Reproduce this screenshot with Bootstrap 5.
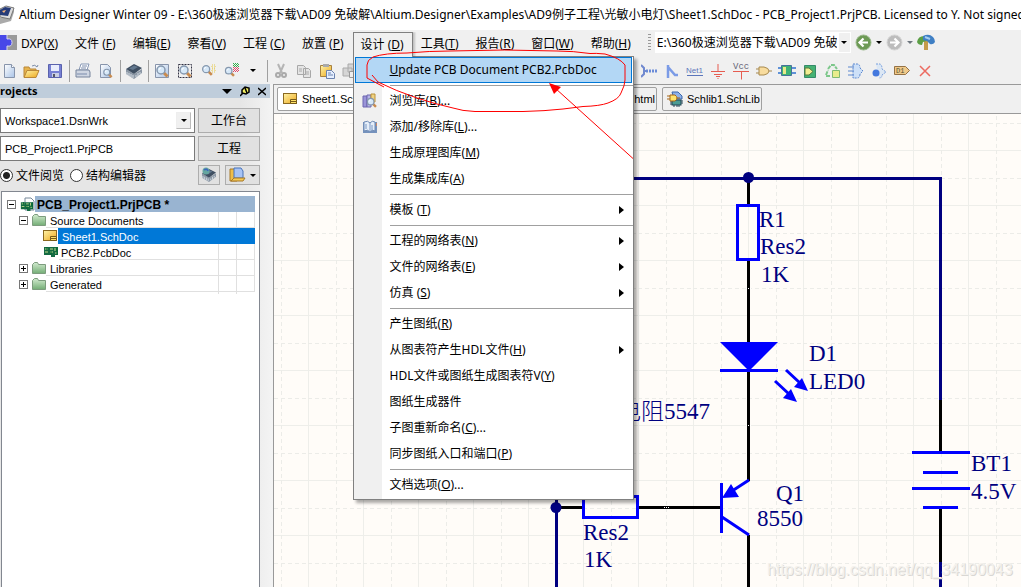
<!DOCTYPE html>
<html lang="zh-CN">
<head>
<meta charset="utf-8">
<meta name="viewport" content="width=device-width, initial-scale=1">
<title>Altium Designer Winter 09</title>
<link href="https://cdn.jsdelivr.net/npm/bootstrap@5.3.0/dist/css/bootstrap.min.css" rel="stylesheet">
<style>
  :root { --face: #f0f0f0; --line: #a0a0a0; --ui: "Noto Sans", "Noto Sans CJK SC", sans-serif; --small: "Liberation Sans", "Noto Sans CJK SC", sans-serif; }
  body { font: 12px/16px var(--ui); color: #000; background: var(--face); overflow: hidden; }
  svg { display: block; flex: none; }
  button { font: inherit; color: inherit; background: none; border: 0; padding: 0; }
  .titlebar { height: 30px; background: #fff; }
  .titlebar h1 { font-size: 12px; line-height: 16px; }
  .menubar { height: 27px; padding-top: 2px; }
  .menubar .top-item { height: 25px; padding: 0 9px 1px 8px; white-space: nowrap; }
  .menu-open { z-index: 20; }
  .menu-open > .top-item { position: relative; z-index: 2; padding: 0 8px 0 7px; background: var(--face); border: 1px solid #808080; border-bottom: 0; box-shadow: 2px 0 2px #0003; clip-path: inset(0 -4px 0 0); }
  .menu-pop { top: 24px; left: 0; width: 281px; z-index: 1; border: 1px solid #808080; padding-bottom: 1px; box-shadow: 3px 3px 3px #0005; background: linear-gradient(90deg, var(--face) 28px, #fff 28px); }
  .menu-pop button { height: 26px; padding: 0 9px 0 8px; }
  .menu-pop button.active { background: #b3d7f5; border: 1px solid #0078d7; margin: 0 1px; padding: 0 6px; width: calc(100% - 2px); }
  .menu-pop hr { margin: 2px 0 2px 36px; border: 0; height: 1px; background: var(--line); opacity: 1; }
  .slot { width: 28px; flex: none; }
  .grip { width: 3px; height: 18px; background: repeating-linear-gradient(#999 0 1px, transparent 1px 3px); }
  .address { width: 196px; height: 21px; border: 0; border-radius: 0; padding: 0 14px 0 2px; font: inherit; appearance: none; background: linear-gradient(var(--face), var(--face)) right 1px center / 11px 19px no-repeat #fff; color: #000; }
  .caret { width: 0; height: 0; border: 3px solid transparent; border-top-color: currentColor; border-bottom: 0; }
  .toolbar { height: 27px; }
  .tool { width: 23px; height: 24px; display: grid; place-items: center; flex: none; }
  .bar { width: 1px; height: 22px; background: var(--line); margin: 0 1px 0 3px; flex: none; }
  .first-group { margin-left: -3px; }
  .wiring { margin-left: 276px; }
  .side { width: 274px; flex: none; background: linear-gradient(90deg, #e6e6e6 240px, #f4f4f4); border-right: 1px solid #999; font-family: var(--small); font-size: 11px; }
  .side-head { height: 14px; width: 270px; background: #bfcddb; font: bold 11px/14px "Open Sans", sans-serif; }
  .side-body { padding: 10px 13px 0 0; }
  .side-grid { display: grid; grid-template-columns: 195px 62px; gap: 3px; }
  .side .field { height: 25px; border: 1px solid #7a7a7a; border-radius: 0; background: #fff; font: inherit; color: #000; padding: 0 4px 0; width: 100%; min-width: 0; appearance: none; }
  .drop-box { right: 4px; top: 4px; width: 15px; height: 17px; background: var(--face); border: 1px solid #bbb; border-left-color: #eee; border-top-color: #eee; pointer-events: none; }
  .push { background: #e1e1e1; border: 1px solid #adadad; font-size: 12px; }
  .views { height: 20px; margin-top: 4px; font-size: 12px; }
  .views label { margin: 2px 6px 0 3px; }
  .views input { width: 13px; height: 13px; margin: 0; appearance: none; border: 1px solid #333; border-radius: 50%; background: #fff; }
  .views input:checked { background: radial-gradient(#222 0 3px, #fff 4px); }
  .tool-square { width: 22px; margin-right: 5px; }
  .tool-split { width: 35px; }
  .tree { margin: 6px 0 0 1px; border: 1px solid #828790; border-bottom: 0; background: #fff; padding: 4px 4px 0 5px; }
  .tree-row { height: 16px; line-height: 18px; }
  .tree-row .name { height: 16px; flex: 1; white-space: nowrap; padding-left: 2px; display: grid; grid-template-columns: 1fr 18px 18px; border-bottom: 1px solid #e0e0e0; border-right: 1px solid #e0e0e0; }
  .tree-row .name i { border-left: 1px solid #e0e0e0; }
  .tree-row .root { background: #99b4d1; font: bold 12px/18px var(--small); border: 0; }
  .tree-row .sel { background: #0078d7; color: #fff; border: 0; }
  .knob { width: 9px; height: 9px; border: 1px solid #777; background: linear-gradient(#000, #000) center / 5px 1px no-repeat #fff; flex: none; }
  .knob.plus { background: linear-gradient(#000, #000) center / 5px 1px no-repeat, linear-gradient(#000, #000) center / 1px 5px no-repeat #fff; }
  .l1 { padding-left: 12px; }
  .l2 { padding-left: 36px; }
  .tabs { height: 30px; border-top: 1px solid #999; border-bottom: 1px solid #999; padding: 0 3px; gap: 5px; font: 11px/16px var(--small); }
  .doc-tab { height: 24px; border: 1px solid var(--line); border-radius: 2px; padding: 0 1px 0 4px; white-space: nowrap; background: var(--face); }
  .tab-sheet { width: 101px; background: #fff; padding-left: 5px; }
  .tab-html { width: 274px; }
  .sheet { background: #fffcf8; min-height: 0; }
  .sheet text { font: 23px "Liberation Serif", "Noto Sans CJK SC", serif; fill: #000080; }
  .sheet text.thin { font-weight: 300; }
  .sheet .watermark { font: 16px "Liberation Sans", sans-serif; fill: #f3f1ed; }
  .sheet .watermark.shade { fill: #d9d7d3; }
  .notes { inset: 0; pointer-events: none; z-index: 40; }
</style>
</head>
<body class="vh-100 d-flex flex-column position-relative">

<svg width="0" height="0" class="position-absolute" aria-hidden="true">
  <defs>
    <linearGradient id="gold" x1="0" y1="0" x2="1" y2="1"><stop offset="0" stop-color="#fff3a8"/><stop offset="1" stop-color="#eda81c"/></linearGradient>
    <linearGradient id="blue" x1="0" y1="0" x2="1" y2="1"><stop offset="0" stop-color="#fff"/><stop offset="1" stop-color="#a9c3e6"/></linearGradient>
    <linearGradient id="green" x1="0" y1="0" x2="0" y2="1"><stop offset="0" stop-color="#d2ebcf"/><stop offset="1" stop-color="#73ad75"/></linearGradient>
    <symbol id="lens" viewBox="0 0 16 16"><path d="M9.500 9.500l4 4" stroke="#c98b4e" stroke-width="3"/><circle cx="7" cy="7" r="4" fill="#d6e8f8" stroke="#8698ae" stroke-width="1.500"/><path d="M5 7q0-2 2-2" fill="none" stroke="#fff"/></symbol>
    <symbol id="chip" viewBox="0 0 16 16"><path d="M0 6l8 5 8-5v4l-8 6-8-5z" fill="#8b97a5"/><path d="M0 6l8-5 8 4-8 6z" fill="#3f4f62"/><path d="M3 5.500l5-3 4 1.500-5 3z" fill="#62788f"/><path d="M1 9v3M3 10v3M5 11v3M7 12v3M10 12v2M12 10v3M14 9v2" stroke="#d4dbe2"/></symbol>
    <symbol id="folder" viewBox="0 0 14 12"><path d="M.5 11.500v-9l2-2h3l1 2h7v9z" fill="url(#green)" stroke="#7d9c7e"/></symbol>
    <symbol id="schdoc" viewBox="0 0 15 12"><rect x=".5" y=".5" width="13" height="10" fill="url(#gold)" stroke="#8b6920"/><path d="M7.500 6.500h6v4h-6zM7.500 8.500h6" fill="#ffe166" stroke="#765a19"/></symbol>
    <symbol id="pcbdoc" viewBox="0 0 16 12"><path d="M1 1h14v8h-3v2h-4V9H1z" fill="#146b43"/><path d="M2 3h3M7 3h3M2 6h3M7 6h3M12 2v3M12 7h2" stroke="#c7df8e"/><path d="M4 1v3M8 5v4M14 1v8" stroke="#063"/></symbol>
    <symbol id="schlib" viewBox="0 0 16 16"><path d="M5 1h6l4 4v3H7z" fill="#8fb1e8" stroke="#3b67aa"/><rect x="5" y="9" width="9" height="5" fill="#4b9b93" stroke="#245"/><path d="M7 14v2M10 14v2M12 14v2M14 10h2M14 12h2M3 11h2M3 13h2" stroke="#245"/><path d="M3 4h5q4 3 0 6H3z" fill="#ffe36a" stroke="#a66718"/><path d="M0 5h3M0 8h3M10 7h3" stroke="#a66718"/></symbol>
  </defs>
</svg>

<header class="titlebar d-flex align-items-center overflow-hidden">
  <svg width="15" height="20" viewBox="0 0 15 20"><path d="M0 13l10-3 4-8v5l-3 9-11 3z" fill="#aaa"/><path d="M0 4l6-3 8 2-4 11-10-2z" fill="#ddd" stroke="#777"/><path d="M0 5l5-3 6 1-3 8-8-1z" fill="#263b78"/><path d="M2 6l4-1-2 3z" fill="#f4b57c"/></svg>
  <h1 class="m-0 ms-1 fw-normal text-nowrap">Altium Designer Winter 09 - E:\360极速浏览器下载\AD09 免破解\Altium.Designer\Examples\AD9例子工程\光敏小电灯\Sheet1.SchDoc - PCB_Project1.PrjPCB. Licensed to Y. Not signed in.</h1>
</header>

<nav class="menubar d-flex">
  <svg width="17" height="21" viewBox="0 0 17 21"><path d="M0 3h17v15H0z" fill="#999"/><path d="M0 3h7v4q5-1 5 3.500T7 14v4H0z" fill="#4848e8"/><path d="M7 3v4q5-1 5 3.500T7 14v4" fill="none" stroke="#d8d8f0"/></svg>
  <button class="top-item ps-1">DXP(<u>X</u>)</button>
  <button class="top-item">文件 (<u>F</u>)</button>
  <button class="top-item">编辑(<u>E</u>)</button>
  <button class="top-item">察看(<u>V</u>)</button>
  <button class="top-item">工程 (<u>C</u>)</button>
  <button class="top-item">放置 (<u>P</u>)</button>
  <div class="menu-open position-relative">
    <button class="top-item" aria-expanded="true">设计 (<u>D</u>)</button>
    <div class="menu-pop position-absolute" role="menu">
      <button class="active d-flex align-items-center" role="menuitem"><span class="slot"></span><span class="text-nowrap"><u>U</u>pdate PCB Document PCB2.PcbDoc</span></button>
      <hr>
      <button class="d-flex align-items-center w-100" role="menuitem"><span class="slot"><svg width="16" height="16"><path d="M1 3h4v11H1z" fill="#9a94d8" stroke="#6c66b0"/><path d="M5 2h4v12H5z" fill="#b8b5e8" stroke="#6c66b0"/><path d="M9 1h4v8H9z" fill="#efd283" stroke="#bb9239"/><use href="#lens" x="3" y="3" width="13" height="13"/></svg></span><span>浏览库(<u>B</u>)...</span></button>
      <button class="d-flex align-items-center w-100" role="menuitem"><span class="slot"><svg width="16" height="16"><path d="M1 3h14v11H1z" fill="#7592bd"/><path d="M2 3q4-2 6 1 2-3 5-1v9q-3-2-5 1-2-3-6-1z" fill="#e5eef9" stroke="#6f8bb5"/><path d="M8 4v9M4 5v5M10 6v5" stroke="#7b98c4"/><path d="M14.500 4v3" stroke="#c86"/></svg></span><span>添加/移除库(<u>L</u>)...</span></button>
      <button class="d-flex align-items-center w-100" role="menuitem"><span class="slot"></span><span>生成原理图库(<u>M</u>)</span></button>
      <button class="d-flex align-items-center w-100" role="menuitem"><span class="slot"></span><span>生成集成库(<u>A</u>)</span></button>
      <hr>
      <button class="d-flex align-items-center w-100" role="menuitem"><span class="slot"></span><span>模板 (<u>T</u>)</span><svg class="ms-auto" width="5" height="8"><path d="M0 0v8l5-4z"/></svg></button>
      <hr>
      <button class="d-flex align-items-center w-100" role="menuitem"><span class="slot"></span><span>工程的网络表(<u>N</u>)</span><svg class="ms-auto" width="5" height="8"><path d="M0 0v8l5-4z"/></svg></button>
      <button class="d-flex align-items-center w-100" role="menuitem"><span class="slot"></span><span>文件的网络表(<u>E</u>)</span><svg class="ms-auto" width="5" height="8"><path d="M0 0v8l5-4z"/></svg></button>
      <button class="d-flex align-items-center w-100" role="menuitem"><span class="slot"></span><span>仿真 (<u>S</u>)</span><svg class="ms-auto" width="5" height="8"><path d="M0 0v8l5-4z"/></svg></button>
      <hr>
      <button class="d-flex align-items-center w-100" role="menuitem"><span class="slot"></span><span>产生图纸(<u>R</u>)</span></button>
      <button class="d-flex align-items-center w-100" role="menuitem"><span class="slot"></span><span>从图表符产生HDL文件(<u>H</u>)</span><svg class="ms-auto" width="5" height="8"><path d="M0 0v8l5-4z"/></svg></button>
      <button class="d-flex align-items-center w-100" role="menuitem"><span class="slot"></span><span>HDL文件或图纸生成图表符V(<u>Y</u>)</span></button>
      <button class="d-flex align-items-center w-100" role="menuitem"><span class="slot"></span><span>图纸生成器件</span></button>
      <button class="d-flex align-items-center w-100" role="menuitem"><span class="slot"></span><span>子图重新命名(<u>C</u>)...</span></button>
      <button class="d-flex align-items-center w-100" role="menuitem"><span class="slot"></span><span>同步图纸入口和端口(<u>P</u>)</span></button>
      <hr>
      <button class="d-flex align-items-center w-100" role="menuitem"><span class="slot"></span><span>文档选项(<u>O</u>)...</span></button>
    </div>
  </div>
  <button class="top-item">工具(<u>T</u>)</button>
  <button class="top-item">报告(<u>R</u>)</button>
  <button class="top-item">窗口(<u>W</u>)</button>
  <button class="top-item">帮助(<u>H</u>)</button>
  <div class="d-flex align-items-center ms-2 pb-1">
    <span class="grip me-1"></span>
    <label class="position-relative d-flex align-items-center"><span class="visually-hidden">Address</span>
      <select class="address"><option>E:\360极速浏览器下载\AD09 免破解</option></select>
      <span class="caret position-absolute end-0 me-1"></span></label>
    <button class="ms-1" aria-label="Back"><svg width="17" height="17"><circle cx="8.500" cy="8.500" r="7.500" fill="#6d9a55" stroke="#9bb98c"/><path d="M13 8.500H5M8.500 4.500l-4 4 4 4" fill="none" stroke="#fff" stroke-width="2.200"/></svg></button>
    <button class="ms-1 p-0" aria-label="Back list"><span class="caret d-block"></span></button>
    <button class="ms-1" aria-label="Forward"><svg width="17" height="17"><circle cx="8.500" cy="8.500" r="7.500" fill="#bdbdbd" stroke="#d5d5d5"/><path d="M4 8.500h8M8.500 4.500l4 4-4 4" fill="none" stroke="#fff" stroke-width="2.200"/></svg></button>
    <button class="ms-1 text-secondary" aria-label="Forward list"><span class="caret d-block"></span></button>
    <button class="ms-1" aria-label="Home"><svg width="18" height="17"><path d="M7 6h4v10H7z" fill="#c59b4a"/><path d="M0 8q1-6 7-6l3 5-4 1-1 3q-4 0-5-3z" fill="#5b9e45"/><path d="M6 2q6-3 10 1 2 2 2 5-2 3-5 2l-3-3-4-1z" fill="#3f7fc4"/><path d="M8 3l5 2" stroke="#a3cdf0" stroke-width="2"/></svg></button>
  </div>
</nav>

<div class="toolbar d-flex align-items-center overflow-hidden" role="toolbar">
  <div class="d-flex first-group">
    <button class="tool" aria-label="New"><svg width="16" height="16"><path d="M3.500 1.500h7l3 3v10h-10z" fill="url(#blue)" stroke="#8794ab"/><path d="M10.500 1.500v3h3" fill="#fff" stroke="#8794ab"/></svg></button>
    <button class="tool" aria-label="Open"><svg width="17" height="16"><path d="M1 14V4h5l1 2h6v3" fill="#e6b34c" stroke="#b98739"/><path d="M1 14.500l3-7h12l-3 7z" fill="url(#gold)" stroke="#b98739"/><path d="M9 3q3-2 5 1l1-2" fill="none" stroke="#7b8ca8"/></svg></button>
    <button class="tool" aria-label="Save"><svg width="16" height="16"><path d="M1.500 1.500h13v13h-13z" fill="#7780d4" stroke="#5a62ad"/><path d="M4 2h8v6H4z" fill="#e9edfc"/><path d="M5 10h7v4H5z" fill="#c9cfe5"/><path d="M6 11h2v3H6z" fill="#556"/></svg></button>
  </div>
  <span class="bar"></span>
  <button class="tool" aria-label="Print"><svg width="16" height="16"><path d="M4 7l2-6h8l-2 6z" fill="#fff" stroke="#8798b5"/><path d="M1 7h13l1 2v5H1z" fill="#cfd6e2" stroke="#76849c"/><path d="M2 11h10M7 3h5M6 5h5" stroke="#7b8bab"/></svg></button>
  <button class="tool" aria-label="Preview"><svg width="16" height="16"><path d="M2.500 1.500h7l3 3v10h-10z" fill="url(#blue)" stroke="#8794ab"/><use href="#lens" x="3" y="4" width="13" height="12"/></svg></button>
  <span class="bar"></span>
  <button class="tool" aria-label="Board"><svg width="16" height="16"><use href="#chip"/></svg></button>
  <span class="bar"></span>
  <button class="tool" aria-label="Fit document"><svg width="16" height="16"><path d="M1.500 1.500h13v13h-13z" fill="url(#blue)" stroke="#8794ab"/><use href="#lens" width="16" height="16"/></svg></button>
  <button class="tool" aria-label="Zoom area"><svg width="16" height="16"><path d="M1.500 1.500h13v13h-13z" fill="none" stroke="#334" stroke-dasharray="2 1"/><use href="#lens" width="16" height="16"/></svg></button>
  <button class="tool" aria-label="Zoom selected"><svg width="16" height="16"><use href="#lens" width="14" height="14"/><path d="M12 2h3v3h-3zM12 6h3v3h-3z" fill="none" stroke="#e5c84a" stroke-dasharray="1 1"/></svg></button>
  <button class="tool" aria-label="Filter"><svg width="16" height="16"><use href="#lens" y="2" width="13" height="13"/><path d="M10 .5h6M11 1.500h5M10 2.500h6M11 3.500h5" stroke="#2eb04a" stroke-dasharray="1 1"/><path d="M10 4.500h6M11 5.500h5M10 6.500h6M11 7.500h5M10 8.500h6" stroke="#e04a6c" stroke-dasharray="1 1"/></svg></button>
  <button class="px-1" aria-label="More"><span class="caret d-block mx-1"></span></button>
  <span class="bar"></span>
  <button class="tool" aria-label="Cut"><svg width="16" height="16"><path d="M5 1l4 9M11 1L7 10" stroke="#b5b5b5" stroke-width="2"/><circle cx="5" cy="12" r="2" fill="none" stroke="#aaa" stroke-width="2"/><circle cx="11" cy="12" r="2" fill="none" stroke="#aaa" stroke-width="2"/></svg></button>
  <button class="tool" aria-label="Copy"><svg width="16" height="16"><path d="M1.500 2.500h6l2 2v7h-8zM7.500 5.500h5l2 2v7h-7z" fill="#e5e5e5" stroke="#a8a8a8"/><path d="M3 6h3M3 8h3M9 9h4M9 11h4" stroke="#aaa"/></svg></button>
  <button class="tool" aria-label="Paste"><svg width="16" height="16"><path d="M1.500 2.500h11v11h-11z" fill="url(#gold)" stroke="#a78140"/><path d="M4 1h6v3H4z" fill="#aaa"/><path d="M7.500 7.500h5l3 3v5h-8z" fill="#e6efff" stroke="#6b83af"/><path d="M9 10h3M9 12h5" stroke="#6b83af"/></svg></button>
  <button class="tool" aria-label="Paste array"><svg width="16" height="16"><path d="M6 1h9v8H6zM1 5h9v8H1z" fill="#d5d5d5" stroke="#aaa"/><path d="M7.500 8.500h5v6h-5z" fill="#eee" stroke="#999"/></svg></button>
  <div class="d-flex wiring">
    <button class="tool" aria-label="Bus"><svg width="16" height="16"><path d="M0 2l3 3v6l-3 3M3 8h3" fill="none" stroke="#7089cf" stroke-width="2"/><path d="M5 8h11" stroke="#6a8bd8" stroke-width="3" stroke-dasharray="2 1"/></svg></button>
    <button class="tool" aria-label="Bus entry"><svg width="16" height="16"><path d="M4 2v13M4 4l7 8h3" fill="none" stroke="#7b9be6" stroke-width="2.500"/></svg></button>
    <button class="tool" aria-label="Net label"><svg width="18" height="16"><text x="0" y="10" font-family="Liberation Sans" font-size="8" fill="#5c76bb">Net1</text><path d="M1 12.500h16" stroke="#5c76bb"/></svg></button>
    <button class="tool" aria-label="Ground"><svg width="16" height="16"><path d="M8 1v8M1 8.500h14M4 11.500h8M6 13.500h4M7.500 15.500h1" stroke="#e65c50"/></svg></button>
    <button class="tool" aria-label="VCC"><svg width="18" height="18"><text x="1" y="7" font-family="Liberation Mono" font-size="9" fill="#667">Vcc</text><path d="M1 9.500h16M9.500 9.500v8" stroke="#e65c50"/></svg></button>
    <button class="tool" aria-label="Part"><svg width="16" height="16"><path d="M3 4h5q5 1 5 4t-5 4H3z" fill="#f8dc9e" stroke="#a7894e"/><path d="M0 6h3M0 10h3M13 8h3" stroke="#a7894e"/></svg></button>
    <button class="tool" aria-label="Sheet symbol"><svg width="18" height="16"><path d="M3.500 2.500h10v10h-10z" fill="#3fb275" stroke="#46729b"/><path d="M5 4h3v7H5z" fill="#e9e98a"/><path d="M0 5h3M0 10h3M14 5h4M14 10h4" stroke="#5f92d8" stroke-width="2"/></svg></button>
    <button class="tool" aria-label="Sheet entry"><svg width="16" height="16"><path d="M2.500 2.500h11v12h-11z" fill="#45b273" stroke="#348a69"/><path d="M3 5h4l4 3.500L7 12H3z" fill="#f2ee91" stroke="#58793d"/></svg></button>
    <button class="tool" aria-label="Device sheet"><svg width="16" height="16"><path d="M3 6l3-4h3l3 4M1 12l2-5M1 13h5" fill="none" stroke="#7cc78a" stroke-width="2" stroke-dasharray="4 1"/><path d="M7.500 7.500h7v7h-7z" fill="#e9ec8c" stroke="#80ba72"/></svg></button>
    <button class="tool" aria-label="Harness connector"><svg width="16" height="16"><path d="M5 1h4q3 0 3 4l3 3-3 3q0 4-3 4H5z" fill="#cde0f8" stroke="#5c88cf" stroke-dasharray="2 1"/><path d="M0 4h6M0 8h6M0 12h6" stroke="#5c88cf"/></svg></button>
    <button class="tool" aria-label="Harness entry"><svg width="16" height="16"><path d="M5 1h4q2 1 2 5l4 3-4 3q0 3-3 3" fill="#dce7f4" stroke="#78a0dd" stroke-dasharray="2 1"/><circle cx="5" cy="10" r="3.500" fill="#4479de"/></svg></button>
    <button class="tool" aria-label="Port"><svg width="16" height="16"><path d="M.5 3.500h11l4 4-4 4H.500z" fill="#f0c98a" stroke="#947245"/><text x="2" y="10" font-family="Liberation Mono" font-size="7" fill="#553">D1</text></svg></button>
    <button class="tool" aria-label="No ERC"><svg width="16" height="16"><path d="M3 3l10 10M13 3L3 13" stroke="#ec6a60" stroke-width="1.500"/></svg></button>
  </div>
</div>

<div class="d-flex flex-grow-1 overflow-hidden">
  <aside class="side d-flex flex-column">
    <div class="side-head d-flex align-items-center"><span>rojects</span>
      <button class="ms-auto" aria-label="Panel menu"><svg width="10" height="6"><path d="M0 1h10l-5 5z"/></svg></button>
      <button class="mx-2" aria-label="Pin"><svg width="10" height="11"><path d="M2 4l3-3 4 1v4L6 8 2 7z" fill="#f1ee61" stroke="#000" stroke-width="1.500"/><path d="M3 7l-3 3M5 2l2 5" stroke="#000" stroke-width="1.500"/></svg></button>
      <button class="me-1" aria-label="Close"><svg width="8" height="9"><path d="M0 1l8 7M8 1L0 8" stroke="#000" stroke-width="1.500"/></svg></button>
    </div>
    <div class="side-body d-flex flex-column flex-grow-1">
      <div class="side-grid">
        <label class="position-relative"><span class="visually-hidden">Workspace</span><select class="field"><option>Workspace1.DsnWrk</option></select><span class="drop-box position-absolute d-grid align-items-center justify-content-center"><span class="caret"></span></span></label>
        <button class="push">工作台</button>
        <label><span class="visually-hidden">Project</span><input class="field" value="PCB_Project1.PrjPCB"></label>
        <button class="push">工程</button>
      </div>
      <div class="views d-flex align-items-center">
        <input type="radio" name="view" id="v1" checked><label for="v1" class="text-nowrap">文件阅览</label>
        <input type="radio" name="view" id="v2"><label for="v2" class="text-nowrap">结构编辑器</label>
        <button class="push tool-square ms-auto h-100 d-grid justify-content-center align-items-center" aria-label="Refresh"><svg width="16" height="16"><use href="#chip" y="1" height="14"/><circle cx="5" cy="4" r="3.500" fill="#65a6a0"/><path d="M3 3q3-2 4 1" fill="none" stroke="#3a66c0" stroke-width="1.500"/></svg></button>
        <button class="push tool-split h-100 d-flex align-items-center justify-content-center" aria-label="Open document"><svg width="17" height="16"><path d="M1 2h5l2 2v10H1z" fill="#efbe49" stroke="#a77928"/><path d="M5 1h7l2 3v7H5z" fill="#a7c3f4" stroke="#4672b9"/><path d="M2 14l3-3h11l-2 3z" fill="#f6ca55" stroke="#a77928"/></svg><span class="caret ms-1"></span></button>
      </div>
      <div class="tree flex-grow-1">
        <div class="tree-row d-flex align-items-center"><span class="knob me-1"></span><svg width="15" height="15"><path d="M5 1h6l3 3v9H5z" fill="#fff" stroke="#789"/><use href="#pcbdoc" y="4" width="14" height="11"/></svg><span class="name root">PCB_Project1.PrjPCB *</span></div>
        <div class="tree-row d-flex align-items-center l1"><span class="knob"></span><svg class="ms-1" width="14" height="12"><use href="#folder"/></svg><span class="name ps-1">Source Documents<i></i><i></i></span></div>
        <div class="tree-row d-flex align-items-center l2"><svg width="15" height="12"><use href="#schdoc"/></svg><span class="name sel ps-1">Sheet1.SchDoc</span></div>
        <div class="tree-row d-flex align-items-center l2"><svg width="16" height="12"><use href="#pcbdoc"/></svg><span class="name">PCB2.PcbDoc<i></i><i></i></span></div>
        <div class="tree-row d-flex align-items-center l1"><span class="knob plus"></span><svg class="ms-1" width="14" height="12"><use href="#folder"/></svg><span class="name ps-1">Libraries<i></i><i></i></span></div>
        <div class="tree-row d-flex align-items-center l1"><span class="knob plus"></span><svg class="ms-1" width="14" height="12"><use href="#folder"/></svg><span class="name ps-1">Generated<i></i><i></i></span></div>
      </div>
    </div>
  </aside>

  <main class="d-flex flex-column flex-grow-1 overflow-hidden">
    <div class="tabs d-flex align-items-center">
      <button class="doc-tab tab-sheet d-flex align-items-center"><svg class="me-1" width="15" height="12"><use href="#schdoc"/></svg>Sheet1.SchDoc</button>
      <button class="doc-tab tab-html d-flex align-items-center justify-content-end">.html</button>
      <button class="doc-tab d-flex align-items-center"><svg class="me-1" width="16" height="16"><use href="#schlib"/></svg>Schlib1.SchLib</button>
    </div>
    <div class="sheet flex-grow-1">
      <svg width="100%" height="100%">
        <defs>
          <pattern id="grid" width="55" height="55" patternUnits="userSpaceOnUse" x="308" y="150">
            <path d="M.5 0v55M0 .5h55" stroke="#eeeeea"/>
            <path d="M28.500 0v55M0 28.500h55" stroke="#ecece8" stroke-dasharray="4 3"/>
          </pattern>
        </defs>
        <g transform="translate(-274 -114)">
          <rect x="274" y="114" width="2400" height="1600" fill="url(#grid)"/>
          <g fill="none" stroke-width="3">
            <path d="M560 507.500h22M639 507.500h82M748.500 178v28M748.500 261v82M748.500 371v110M748.500 535v900M940.500 399v53M940.500 508v54" stroke="#000"/>
            <path d="M556.500 178.500h384V400M940.500 562v900M556.500 178v1300" stroke="#000080"/>
            <g stroke="#00f">
              <path d="M737.500 205.500h21v54h-21zM583.500 496.500h54v21h-54z"/>
              <path d="M720 370.500h58M786 370l14 13M775 381l14 13M721.500 483v50M749 480l-20 13M722 517l27 18"/>
              <path d="M912 452.500h58M923 472.500h35M912 488.500h58M923 507.500h35"/>
            </g>
          </g>
          <path d="M720 342h58l-29 29zM808 391l-14-4 8-9zM797 402l-14-4 8-9zM722 498l9-14 8 13z" fill="#00f"/>
          <circle cx="748.500" cy="177.500" r="5.500" fill="#000080"/><circle cx="556" cy="507.500" r="5.500" fill="#000080"/>
          <path d="M746 288.500h5M746 425.500h5M664 507.500h5" stroke="#fff" stroke-dasharray="1 1"/>
          <text x="759" y="227">R1</text><text x="760" y="254">Res2</text><text x="761" y="282">1K</text>
          <text x="809" y="361">D1</text><text x="809" y="389">LED0</text>
          <text x="971" y="471">BT1</text><text x="971" y="499">4.5V</text>
          <text x="776" y="501">Q1</text><text x="757" y="526">8550</text>
          <text x="583" y="540">Res2</text><text x="584" y="567">1K</text>
          <text class="thin" x="618" y="419">电阻5547</text>
          <text class="watermark shade" x="768" y="576">https://blog.csdn.net/qq_34190043</text>
          <text class="watermark" x="767" y="575">https://blog.csdn.net/qq_34190043</text>
        </g>
      </svg>
    </div>
  </main>
</div>

<svg class="notes position-absolute" width="100%" height="100%" fill="none" stroke="#f00" aria-hidden="true">
  <path d="M372 75L378 82Q396 91 417 98Q435 104 453 108Q462 111 475 111.500H523Q545 111 563 109L583 106.500Q600 106 608 103Q619 99 621 93Q625 85 625 80V65Q620 58 605 54Q595 53 590 53.500Q573 51 557 51Q505 49 450 51Q430 51 407 53Q385 53 373 57Q367 60 367 65V78L384 87"/>
  <path d="M555 88L633 158.500"/><path d="M549 83l12 4-7 7z" fill="#f00" stroke="none"/>
</svg>
<script src="https://cdn.jsdelivr.net/npm/bootstrap@5.3.0/dist/js/bootstrap.bundle.min.js"></script>
</body>
</html>
